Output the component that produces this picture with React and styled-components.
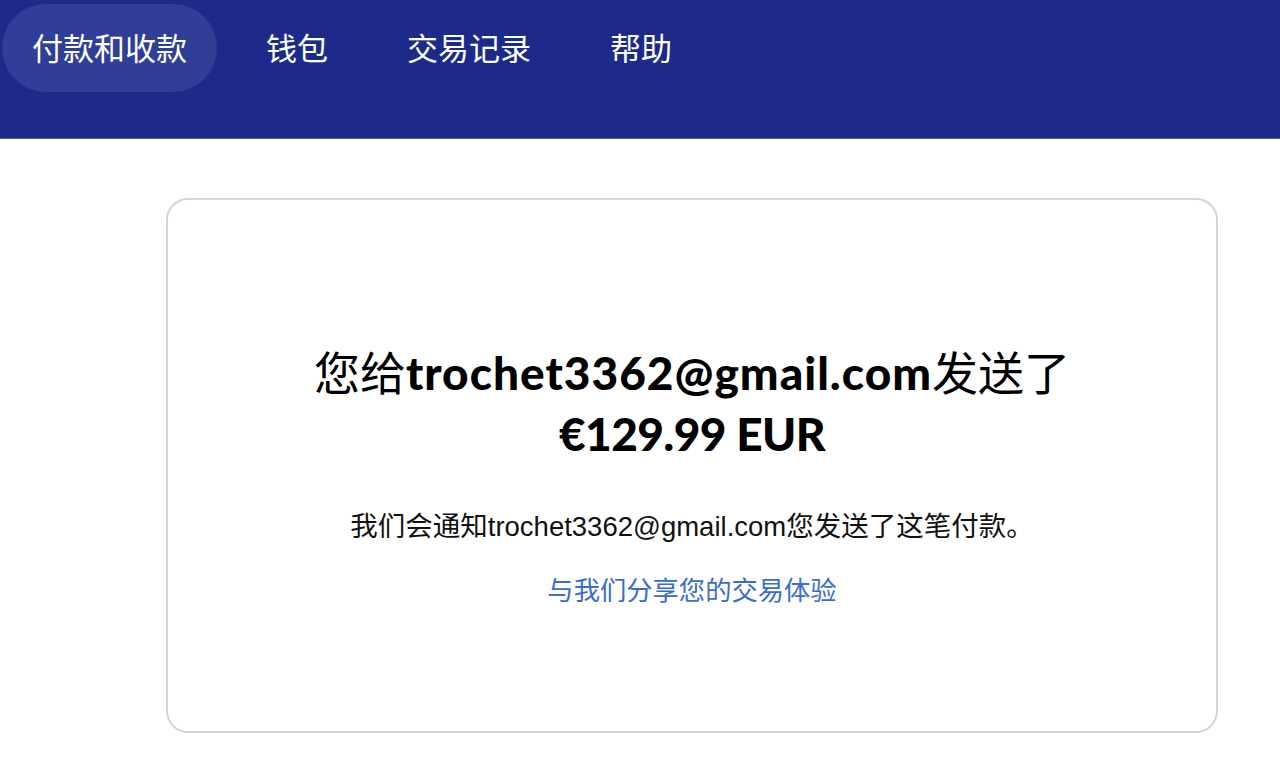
import React from "react";
import styled, { createGlobalStyle } from "styled-components";

const Global = createGlobalStyle`
  html, body { margin: 0; padding: 0; background: #ffffff; }
  body { font-family: "Liberation Sans", "Noto Sans CJK SC", sans-serif; }
`;

const Page = styled.div`
  width: 1280px;
  height: 770px;
  overflow: hidden;
  background: #fff;
`;

const Header = styled.header`
  height: 139px;
  background: #1c2b8a;
  box-sizing: border-box;
  padding: 4px 0 0 2px;
  border-bottom: 1px solid #5a6190;
`;

const Nav = styled.nav`
  display: flex;
  align-items: center;
  gap: 19px;
`;

const NavItem = styled.a`
  display: flex;
  align-items: center;
  box-sizing: border-box;
  height: 88px;
  padding: 0 30px 4px;
  border-radius: 44px;
  font-family: "Noto Sans CJK SC", sans-serif;
  font-size: 31px;
  color: #ffffff;
  background: ${(p) => (p.$active ? "#2f3e97" : "transparent")};
  cursor: pointer;
`;

const Main = styled.main`
  padding: 59px 62px 0 166px;
`;

const Card = styled.section`
  height: 535px;
  box-sizing: border-box;
  border: 2px solid #d4d4d4;
  border-radius: 22px;
  display: flex;
  flex-direction: column;
  align-items: center;
  padding-top: 141px;
`;

const Title = styled.h1`
  margin: 0;
  text-align: center;
  font-family: "Noto Sans CJK SC", sans-serif;
  font-weight: 400;
  font-size: 46px;
  line-height: 58px;
  color: #000;
`;

const Strong = styled.span`
  font-family: "Lato", "Noto Sans CJK SC", sans-serif;
  font-weight: 900;
  letter-spacing: ${(p) => p.$spacing || "0px"};
`;

const Body = styled.p`
  margin: 48px 0 0;
  font-family: "Liberation Sans", "Noto Sans CJK SC", sans-serif;
  font-size: 27.5px;
  line-height: 32px;
  color: #111;
`;

const Link = styled.a`
  margin-top: 30px;
  font-family: "Noto Sans CJK SC", sans-serif;
  font-size: 26.3px;
  line-height: 32px;
  color: #3a6cd0;
  cursor: pointer;
`;

export default function App() {
  const items = ["付款和收款", "钱包", "交易记录", "帮助"];
  return (
    <Page>
      <Global />
      <Header>
        <Nav>
          {items.map((t, i) => (
            <NavItem key={t} $active={i === 0}>
              {t}
            </NavItem>
          ))}
        </Nav>
      </Header>
      <Main>
        <Card>
          <Title>
            您给<Strong $spacing="1px">trochet3362@gmail.com</Strong>发送了
            <br />
            <Strong $spacing="-0.6px">€129.99 EUR</Strong>
          </Title>
          <Body>我们会通知trochet3362@gmail.com您发送了这笔付款。</Body>
          <Link>与我们分享您的交易体验</Link>
        </Card>
      </Main>
    </Page>
  );
}
